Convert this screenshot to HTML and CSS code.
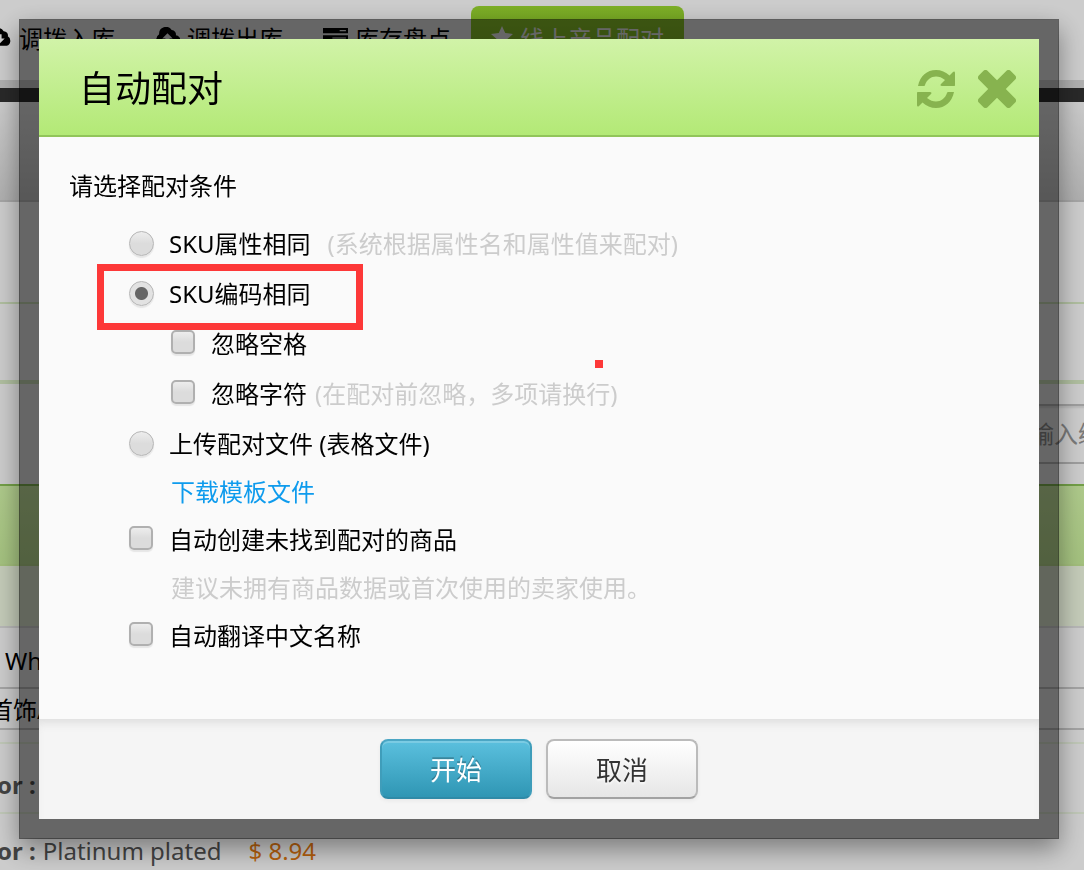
FILE: index.html
```
<!DOCTYPE html>
<html lang="zh-CN">
<head>
  <meta charset="UTF-8">
  <meta name="viewport" content="width=device-width, initial-scale=1.0">
  <title>自动配对</title>
  <link rel="stylesheet" href="styles.css">
</head>
<body>

<div class="page">
  <nav class="tabs">
    <a class="tab" href="#">
      <svg class="tab-icon" viewBox="0 0 24 20"><path d="M6 18a6 6 0 0 1-2-11A6.500 6.500 0 0 1 16 4a4 4 0 0 1 4 5 5 5 0 0 1-1 9z"/><path class="cut" d="M10 7h4v4h3l-5 5-5-5h3z"/></svg>
      调拨入库
    </a>
    <a class="tab" href="#">
      <svg class="tab-icon" viewBox="0 0 24 20"><path d="M6 18a6 6 0 0 1-2-11A6.500 6.500 0 0 1 16 3a4 4 0 0 1 4 5 5 5 0 0 1-1 10z"/><path class="cut" d="M10 15h4v-4h3l-5-5-5 5h3z"/></svg>
      调拨出库
    </a>
    <a class="tab" href="#">
      <svg class="tab-icon" viewBox="0 0 24 20"><path d="M0 1h24v5H0zM0 8h24v5H0zM0 15h24v5H0z"/><path class="cut" d="M16 3h6v1h-6zM9 10h13v1H9zM13 17h9v1h-9z"/></svg>
      库存盘点
    </a>
    <a class="tab active" href="#">
      <svg class="tab-icon" viewBox="0 0 24 23"><path d="M12 0l3.500 7.600 8.500 1-6.200 5.700 1.700 8.500L12 18.700l-7.500 4.100 1.700-8.500L0 8.600l8.500-1z"/></svg>
      线上产品配对
    </a>
  </nav>
  <div class="dark-bar"></div>
  <div class="toolbar"></div>
  <div class="filter"></div>
  <div class="filter-second"></div>
  <div class="search"><input type="text" aria-label="搜索" placeholder="请输入编号"></div>
  <div class="list-head"></div>
  <div class="list-sub"></div>
  <div class="product">
    <div class="product-name">Whi</div>
    <div class="product-type">首饰/</div>
  </div>
  <div class="sku"><b>or :</b></div>
  <div class="sku"><b>or :</b> <span>Platinum plated</span> <span class="price">$ 8.94</span></div>
</div>

<div class="overlay">
  <form class="modal" role="dialog" aria-labelledby="modalTitle">
    <div class="modal-header">
      <h2 id="modalTitle">自动配对</h2>
      <button type="button" class="icon-btn" aria-label="刷新">
        <svg viewBox="0 0 38 38"><path d="M1 16C3 6 10 0 19 0c5 0 10 2 13.500 5.500L36 2c1-1 2-.5 2 1v12c0 1-.5 1-1 1H25c-1.500 0-2-1-1-2l4-4C25 7.500 22 6.500 19 6.500c-5 0-9 3-11 8.500-.3 1-.7 1-1.300 1zM37 22C35 32 28 38 19 38c-5 0-10-2-13.500-5.500L2 36c-1 1-2 .5-2-1V23c0-1 .5-1 1-1h12c1.500 0 2 1 1 2l-4 4c3 2.500 6 3.500 9 3.500 5 0 9-3 11-8.500.3-1 .7-1 1.300-1z"/></svg>
      </button>
      <button type="button" class="icon-btn" aria-label="关闭">
        <svg viewBox="0 0 38 38"><path d="M5.500.8a3 3 0 0 1 4 0L19 10.200 28.500.8a3 3 0 0 1 4 0l4.700 4.700a3 3 0 0 1 0 4L27.800 19l9.400 9.500a3 3 0 0 1 0 4l-4.700 4.700a3 3 0 0 1-4 0L19 27.800l-9.500 9.400a3 3 0 0 1-4 0L.8 32.500a3 3 0 0 1 0-4L10.200 19 .8 9.500a3 3 0 0 1 0-4z"/></svg>
      </button>
    </div>

    <div class="modal-body">
      <p class="lead">请选择配对条件</p>
      <div class="options">
        <div class="row">
          <input type="radio" name="match" id="byAttr">
          <label for="byAttr">SKU属性相同</label>
          <span class="hint wide">(系统根据属性名和属性值来配对)</span>
        </div>
        <div class="row">
          <input type="radio" name="match" id="byCode" checked>
          <label for="byCode">SKU编码相同</label>
          <span class="mark-box"></span>
        </div>
        <div class="row sub">
          <input type="checkbox" id="ignoreSpace">
          <label for="ignoreSpace">忽略空格</label>
          <span class="mark-dot"></span>
        </div>
        <div class="row sub">
          <input type="checkbox" id="ignoreChar">
          <label for="ignoreChar">忽略字符</label>
          <span class="hint">(在配对前忽略，多项请换行)</span>
        </div>
        <div class="row">
          <input type="radio" name="match" id="byFile">
          <label for="byFile">上传配对文件 (表格文件)</label>
        </div>
        <div class="row short sub"><a href="#">下载模板文件</a></div>
        <div class="row short">
          <input type="checkbox" id="autoCreate">
          <label for="autoCreate">自动创建未找到配对的商品</label>
        </div>
        <div class="row short sub"><span class="note">建议未拥有商品数据或首次使用的卖家使用。</span></div>
        <div class="row short">
          <input type="checkbox" id="autoTranslate">
          <label for="autoTranslate">自动翻译中文名称</label>
        </div>
      </div>
    </div>

    <div class="modal-footer">
      <button type="button" class="btn btn-primary">开始</button>
      <button type="button" class="btn">取消</button>
    </div>
  </form>
</div>

</body>
</html>
```
FILE: styles.css
```
* {
  box-sizing: border-box;
}
body {
  margin: 0;
  height: 100vh;
  overflow: hidden;
  background: #fff;
  color: #000;
  font-family: "Noto Sans", "Noto Sans CJK SC", sans-serif;
  font-size: 24px;
}
svg {
  display: block;
  fill: currentColor;
}

/* page behind the dialog */
.tabs {
  display: flex;
  height: 88px;
  margin-left: -33px;
  padding-top: 6px;
  border-bottom: 8px solid #dcdcdc;
}
.tab {
  display: flex;
  align-items: center;
  gap: 7px;
  height: 74px;
  padding: 0 20px 12px;
  color: #000;
  text-decoration: none;
  white-space: nowrap;
}
.tab-icon {
  width: 25px;
  flex: none;
}
.tab-icon .cut {
  fill: #fff;
}
.tab.active {
  background: linear-gradient(#9ddb31, #77b51b);
  color: #fff;
  border-radius: 8px 8px 0 0;
}
.tab.active .tab-icon {
  width: 22px;
}
.dark-bar {
  height: 14px;
  background: #333;
}
.toolbar {
  height: 100px;
  background: linear-gradient(#fdfdfd, #dbdbdb);
  border-bottom: 2px solid #cfcfcf;
}
.filter {
  height: 102px;
  border-bottom: 2px solid #dcefc8;
}
.filter-second {
  height: 80px;
  border-bottom: 4px solid #dcefc8;
}
.search {
  display: flex;
  justify-content: flex-end;
  height: 100px;
  padding: 20px 0;
  overflow: hidden;
}
.search input {
  width: 180px;
  height: 60px;
  margin-right: -76px;
  padding: 0 0 2px 24px;
  border: 2px solid #c6c6c6;
  box-shadow: inset 0 2px 2px #e8e8e8;
  font: inherit;
}
.search input::placeholder {
  color: #999;
}
.list-head {
  height: 82px;
  border-top: 2px solid #90c85a;
  border-bottom: 2px solid #cbee9b;
  background: linear-gradient(#dafcae, #cdf29f);
}
.list-sub {
  height: 62px;
  background: #f5fee7;
  border-bottom: 2px solid #e5e5e5;
}
.product {
  height: 116px;
  padding-top: 5px;
  border-bottom: 2px solid #f0fae6;
}
.product-name {
  height: 56px;
  padding-left: 5px;
  line-height: 56px;
  border-bottom: 2px solid #cdcdcd;
}
.product-type {
  height: 41px;
  margin-left: -11px;
  line-height: 41px;
  border-bottom: 2px solid #cdcdcd;
}
.sku {
  display: flex;
  gap: 7px;
  height: 70px;
  line-height: 82px;
  border-bottom: 2px solid #f0fae6;
  color: #555;
}
.sku:last-child {
  line-height: 74px;
}
.sku b {
  margin-left: -3px;
}
.price {
  margin-left: 20px;
  color: #e47911;
}

/* dialog */
.overlay {
  position: fixed;
  inset: 0;
  padding: 19px 25px 31px 19px;
  background: rgba(0, 0, 0, 0.2);
  overflow: hidden;
}
.modal {
  border: 20px solid rgba(0, 0, 0, 0.5);
  background: #fafafa;
  background-clip: padding-box;
  box-shadow: 0 10px 24px rgba(0, 0, 0, 0.4);
}
.modal-header {
  display: flex;
  align-items: center;
  height: 98px;
  padding: 0 23px 0 40px;
  background: linear-gradient(#d1f3a8, #b3e976);
  border-bottom: 2px solid #91c55a;
}
.modal-header h2 {
  flex: 1;
  margin: 0;
  padding-bottom: 2px;
  font-size: 36px;
  font-weight: 400;
}
.icon-btn {
  width: 38px;
  margin-left: 23px;
  padding: 4px 0 0;
  border: none;
  background: none;
  color: #87b34f;
  cursor: pointer;
}
.modal-body {
  padding: 24px 30px 59px;
}
.lead {
  margin: 0 0 7px;
  line-height: 50px;
}
.options {
  padding-left: 60px;
}
.row {
  position: relative;
  display: flex;
  align-items: center;
  height: 50px;
  white-space: nowrap;
}
.row.short {
  height: 48px;
}
.row.sub {
  padding-left: 42px;
}
.row label,
.row a,
.hint,
.note {
  padding-bottom: 2px;
}
.row.short label,
.row.short a,
.note {
  padding-bottom: 4px;
}
.row a {
  color: #0e9bed;
  text-decoration: none;
}
.row input {
  appearance: none;
  flex: none;
  width: 24px;
  height: 24px;
  margin: 0 16px 2px 0;
  border: 2px solid #b0b0b0;
  border-radius: 5px;
  background: linear-gradient(#ededed, #dcdcdc 50%);
  box-shadow: 0 2px 1px #e6e6e6;
}
.row.short input {
  margin-bottom: 4px;
}
.row input[type="radio"] {
  width: 25px;
  height: 25px;
  margin: 0 15px 0 0;
  border: 1px solid #b5b5b5;
  border-radius: 50%;
}
.row input[type="radio"]:checked {
  background: radial-gradient(circle, #666 6px, #e2e2e2 7px);
}
.hint,
.note {
  color: #ccc;
}
.hint {
  margin-left: 8px;
}
.hint.wide {
  margin-left: 17px;
}
.mark-box {
  position: absolute;
  left: -32px;
  top: -4px;
  width: 266px;
  height: 66px;
  border: 7px solid #fd3838;
}
.mark-dot {
  position: absolute;
  left: 466px;
  top: 42px;
  width: 8px;
  height: 8px;
  background: #fd3838;
}
.modal-footer {
  display: flex;
  justify-content: center;
  gap: 14px;
  padding: 20px;
  background: #f5f5f5;
  box-shadow: inset 0 8px 10px -4px #dedede;
}
.btn {
  width: 152px;
  height: 60px;
  border: 2px solid #bbb;
  border-bottom-color: #a2a2a2;
  border-radius: 8px;
  background: linear-gradient(#fff, #e6e6e6);
  box-shadow: 0 2px 4px rgba(0, 0, 0, 0.05);
  color: #333;
  font-family: inherit;
  font-size: 26px;
  text-shadow: 0 2px 2px rgba(255, 255, 255, 0.75);
  cursor: pointer;
}
.btn-primary {
  border-color: #4ba6c4 #3f9dba #2f8aa7;
  background: linear-gradient(#5bc0de, #2f96b4);
  box-shadow: inset 0 2px 0 rgba(255, 255, 255, 0.2), 0 2px 4px rgba(0, 0, 0, 0.05);
  color: #fff;
  text-shadow: 0 -2px 0 rgba(0, 0, 0, 0.25);
}
```
